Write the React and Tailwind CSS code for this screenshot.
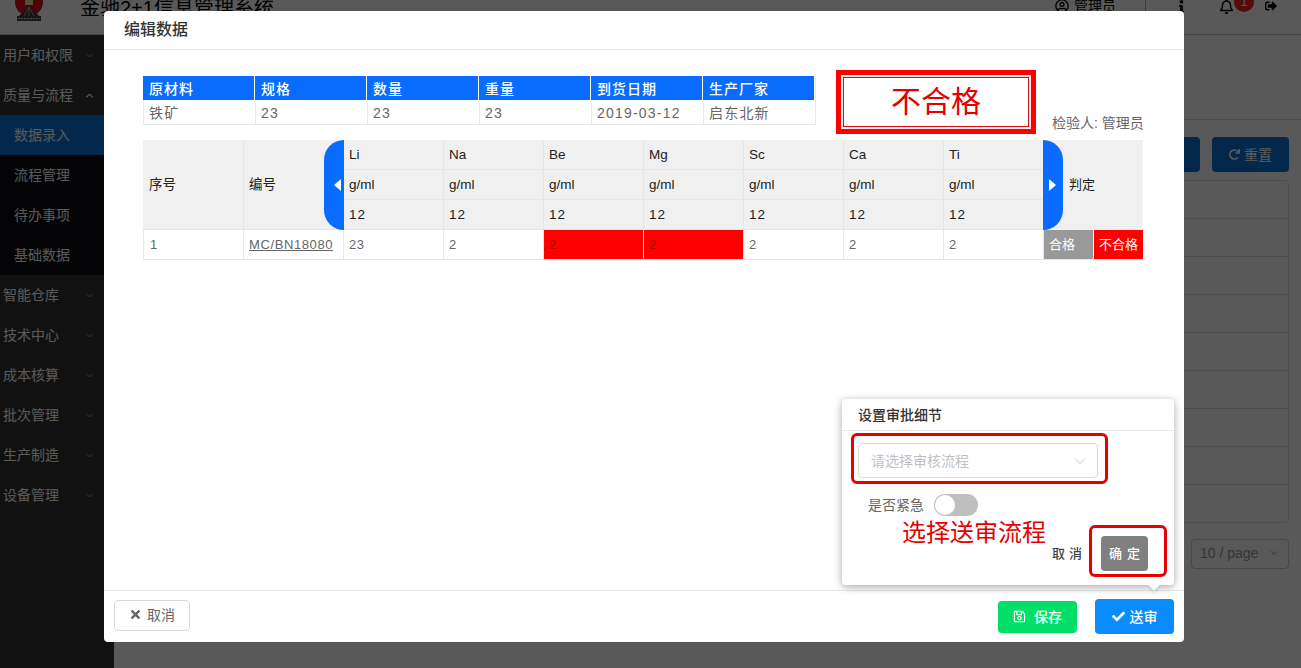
import { ChevronDown, ChevronUp } from "lucide-react";
import { FaTimes, FaCheck, FaRegSave, FaRedo, FaSignOutAlt, FaRegBell, FaInfo, FaRegUserCircle } from "react-icons/fa";

const menu = [
  { name: "用户和权限" },
  {
    name: "质量与流程",
    open: true,
    children: ["数据录入", "流程管理", "待办事项", "基础数据"],
  },
  { name: "智能仓库" },
  { name: "技术中心" },
  { name: "成本核算" },
  { name: "批次管理" },
  { name: "生产制造" },
  { name: "设备管理" },
];

const elements = ["Li", "Na", "Be", "Mg", "Sc", "Ca", "Ti"];
const infoHead = ["原材料", "规格", "数量", "重量", "到货日期", "生产厂家"];
const infoRow = ["铁矿", "23", "23", "23", "2019-03-12", "启东北新"];
const values = ["23", "2", "2", "2", "2", "2", "2"];

// the svg sits 9px above the page top, the header clips it
const Logo = () => (
  <svg width="32" height="30" viewBox="0 0 32 30" className="ml-[13px] shrink-0">
    <circle cx="16" cy="11" r="14" fill="#d8131b" />
    <rect x="12" y="8" width="8" height="6" fill="#f4d9a0" />
    <path d="M16 15 L27 26 L5 26 Z" fill="#3a3a3a" />
    <path d="M16 16 L11 25 M16 16 L16 25 M16 16 L21 25" stroke="#cfcfcf" strokeWidth="0.7" />
    <rect x="4" y="25" width="24" height="5" fill="#444" />
    <path d="M5 27.5 H27" stroke="#ddd" strokeWidth="1" strokeDasharray="2 1" />
  </svg>
);

const Sidebar = () => (
  <aside className="w-[114px] shrink-0 bg-[#313131] text-white text-sm">
    {menu.map((item) => (
      <div key={item.name}>
        <div className="h-10 pl-[3px] pr-[19px] flex items-center justify-between">
          <span>{item.name}</span>
          {item.open ? <ChevronUp size={11} strokeWidth={3} /> : <ChevronDown size={11} strokeWidth={2} className="opacity-60" />}
        </div>
        {item.children && (
          <div className="bg-[#0c0c14]">
            {item.children.map((child, i) => (
              <div key={child} className={`h-10 pl-[14px] flex items-center ${i === 0 ? "bg-[#0a74d8]" : ""}`}>
                {child}
              </div>
            ))}
          </div>
        )}
      </div>
    ))}
  </aside>
);

const PageBehind = () => (
  <div className="flex flex-col h-full bg-white">
    <header className="h-[35px] shrink-0 border-b border-[#c8c8c8] flex items-start text-black">
      <div className="h-3 flex items-center grow">
        <Logo />
        <span className="ml-[35px] mt-1 text-xl">金驰2+1信息管理系统</span>
        <div className="ml-auto flex items-center text-sm">
          <FaRegUserCircle size={14} />
          <span className="ml-[5px]">管理员</span>
          <span className="ml-[29px] w-px h-3 bg-[#aaa]" />
          <FaInfo size={13} className="ml-[29px]" />
          <FaRegBell size={15} className="ml-[31px]" />
          <span className="-mt-2 w-5 h-5 rounded-full bg-[#f5222d] text-white text-xs flex items-center justify-center">1</span>
          <FaSignOutAlt size={12} className="ml-[11px] mr-6" />
        </div>
      </div>
    </header>
    <div className="flex grow min-h-0">
      <Sidebar />
      <main className="grow flex flex-col">
        <div className="h-[85px] border-b border-[#ddd]" />
        <div className="flex justify-end gap-3 pr-3 pt-[17px]">
          <button className="w-[77px] h-[35px] rounded bg-[#0a74d8] text-white text-sm">查询</button>
          <button className="w-[77px] h-[35px] rounded bg-[#0a74d8] text-white text-sm flex items-center justify-center gap-1">
            <FaRedo size={11} /> 重置
          </button>
        </div>
        <div className="mt-2 mx-3 h-[343px] overflow-hidden border border-[#ddd] rounded-sm">
          {Array.from({ length: 9 }).map((_, i) => (
            <div key={i} className="h-[38px] border-b border-[#ddd] last:border-b-0" />
          ))}
        </div>
        <div className="mt-[16px] pr-3 flex justify-end">
          <div className="w-[98px] h-[30px] border border-[#ccc] rounded flex items-center justify-between px-2 text-sm text-[#999] pb-[2px]">
            10 / page <ChevronDown size={12} />
          </div>
        </div>
      </main>
    </div>
  </div>
);

const InfoTable = () => (
  <div className="w-[673px] border-b border-r border-[#e8e8e8] grid grid-cols-[repeat(6,112px)]">
    {infoHead.map((h) => (
      <div key={h} className="h-6 pl-[6px] pt-px bg-[#0a6cff] text-white text-sm font-medium leading-6 border-r border-white last:border-r-0 tracking-[1px]">
        {h}
      </div>
    ))}
    {infoRow.map((v, i) => (
      <div key={i} className="h-6 pl-[5px] pt-px text-sm leading-6 text-[#666] border-l border-[#e8e8e8] tracking-[1.2px]">
        {v}
      </div>
    ))}
  </div>
);

const headCell = "flex items-center pl-[5px] pt-px bg-[#f0f0f0] border-l border-b border-[#e6e6e6] text-[13.5px] text-[#222]";
const bodyCell = "flex items-center border-l border-b border-[#e6e6e6] text-[13px] text-[#666] tracking-[0.6px]";

const Caret = ({ points }) => (
  <svg width="7" height="12" viewBox="0 0 7 12" fill="white">
    <polygon points={points} />
  </svg>
);

const DataTable = () => (
  <div className="relative w-[1000px] mt-[6px] grid grid-cols-[repeat(10,100px)] grid-rows-[repeat(4,30px)] rounded-sm">
    <div className={`${headCell} border-l-0 pl-[6px] row-span-3 col-start-1`}>序号</div>
    <div className={`${headCell} row-span-3 col-start-2`}>编号</div>
    {elements.map((el, i) => (
      <div key={el} className={headCell} style={{ gridColumnStart: i + 3, gridRowStart: 1 }}>{el}</div>
    ))}
    {elements.map((el, i) => (
      <div key={el} className={headCell} style={{ gridColumnStart: i + 3, gridRowStart: 2 }}>g/ml</div>
    ))}
    {elements.map((el, i) => (
      <div key={el} className={`${headCell} tracking-[1px]`} style={{ gridColumnStart: i + 3, gridRowStart: 3 }}>12</div>
    ))}
    <div className="row-span-3 col-start-10 row-start-1 bg-[#f0f0f0] flex items-center pl-[26px] text-[13px] text-[#222]">判定</div>

    <div className={`${bodyCell} pl-[6px]`}>1</div>
    <div className={`${bodyCell} pl-[5px]`}><span className="underline">MC/BN18080</span></div>
    {values.map((v, i) => (
      <div key={i} className={bodyCell}>
        {i === 2 || i === 3 ? (
          <span className="h-full w-full bg-[#ff0000] pl-[5px] flex items-center text-[#a80000]">{v}</span>
        ) : (
          <span className="pl-[5px]">{v}</span>
        )}
      </div>
    ))}
    <div className="flex border-l border-b border-r-0 border-[#e6e6e6] text-[13px] text-white">
      <span className="w-[49px] mr-px bg-[#999] pl-[5px] flex items-center">合格</span>
      <span className="grow bg-[#ff0000] flex items-center justify-center">不合格</span>
    </div>

    <button className="absolute left-[181px] top-0 w-5 h-[90px] pr-[3px] bg-[#0a6cff] rounded-l-[20px] flex items-center justify-end">
      <Caret points="0,6 7,0 7,12" />
    </button>
    <button className="absolute left-[900px] top-0 w-5 h-[90px] pl-[6px] bg-[#0a6cff] rounded-r-[20px] flex items-center justify-start">
      <Caret points="7,6 0,0 0,12" />
    </button>
  </div>
);

const Popover = () => (
  <div className="absolute left-[738px] top-[349px] w-[332px] h-[186px] bg-white rounded shadow-[0_2px_8px_rgba(0,0,0,0.35)]">
    <div className="h-[32px] pl-4 border-b border-[#e8e8e8] flex items-center text-sm font-medium text-[#333]">设置审批细节</div>
    <div className="mt-[12px] ml-4 w-[240px] h-[35px] border border-[#d9d9d9] rounded flex items-center justify-between pl-3 pr-[7px] text-sm text-[#bfbfbf]">
      请选择审核流程
      <ChevronDown size={20} strokeWidth={1} />
    </div>
    <div className="mt-[16px] ml-[26px] flex items-center text-sm text-[#666]">
      是否紧急
      <span className="ml-[10px] w-[44px] h-[22px] rounded-full bg-[#bfbfbf] flex items-center">
        <span className="w-[20px] h-[20px] ml-px rounded-full bg-white" />
      </span>
    </div>
    <div className="absolute left-[60px] top-[118px] text-2xl leading-8 text-[#e60000]">选择送审流程</div>
    <div className="absolute left-[210px] top-[137px] flex items-center text-[13px] font-medium text-[#444] tracking-[4px]">
      <span>取消</span>
      <button className="ml-[15px] w-[47px] h-[35px] rounded bg-[#808080] text-white tracking-[5px] pl-[5px] font-medium">确定</button>
    </div>
    <div className="absolute left-[9px] top-[34px] w-[257px] h-[51px] border-[3px] border-[#e60000] rounded-md" />
    <div className="absolute left-[247px] top-[126px] w-[78px] h-[52px] border-[3px] border-[#e60000] rounded-md" />
    <div className="absolute left-[308px] top-[182px] w-2 h-2 rotate-45 bg-white shadow-[2px_2px_3px_rgba(0,0,0,0.1)]" />
  </div>
);

const Modal = () => (
  <div className="absolute left-[104px] top-[11px] w-[1080px] h-[631px] bg-white rounded flex flex-col">
    <div className="h-[39px] shrink-0 border-b border-[#e8e8e8] pl-5 flex items-center text-base font-medium text-[#333]">编辑数据</div>
    <div className="relative grow pt-[26px] pl-[39px]">
      <div className="flex items-start">
        <InfoTable />
        <div className="ml-5 -mt-[6px] w-[200px] h-16 border-[5px] border-[#ff0000] p-[2px] bg-[#eee]">
          <div className="h-full pb-[2px] border border-[#d01010] bg-white flex items-center justify-center text-[30px] text-[#e60000]">不合格</div>
        </div>
        <div className="ml-4 mt-[37px] w-[92px] text-sm text-[#666] whitespace-nowrap">检验人: 管理员</div>
      </div>
      <DataTable />
      <Popover />
    </div>
    <div className="h-[52px] shrink-0 border-t border-[#e8e8e8] px-[10px] flex items-center justify-between text-sm">
      <button className="w-[76px] h-[31px] mb-[3px] pb-px border border-[#d9d9d9] rounded text-[#666] flex items-center justify-center gap-[5px]">
        <FaTimes size={13} /> 取消
      </button>
      <div className="flex items-center gap-[18px]">
        <button className="w-[79px] h-8 rounded bg-[#00e068] text-white font-medium flex items-center justify-center gap-2">
          <FaRegSave size={13} /> 保存
        </button>
        <button className="w-[79px] h-[35px] rounded bg-[#0a8cff] text-white font-medium flex items-center justify-center gap-[5px]">
          <FaCheck size={13} /> 送审
        </button>
      </div>
    </div>
  </div>
);

const App = () => (
  <div className="relative w-[1301px] h-[668px] overflow-hidden font-['Liberation_Sans','Noto_Sans_CJK_SC',sans-serif]">
    <PageBehind />
    <div className="absolute inset-0 bg-black/65" />
    <Modal />
  </div>
);

export default App;
